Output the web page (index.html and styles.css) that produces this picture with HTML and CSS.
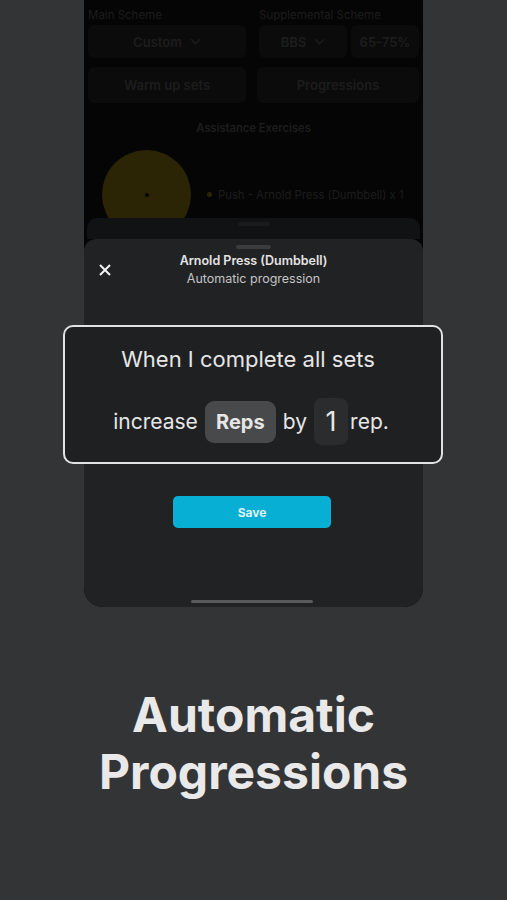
FILE: index.html
```html
<!DOCTYPE html>
<html lang="en">

<head>
    <meta charset="UTF-8">
    <meta name="viewport" content="width=device-width, initial-scale=1.0">
    <title>Automatic Progressions</title>
    <link rel="stylesheet" href="styles.css">
</head>

<body>
    <div class="stage">
        <div class="phone">
            <!-- dimmed program screen behind the sheet -->
            <div class="backdrop">
                <div class="scheme-row">
                    <div class="scheme-col">
                        <span class="label">Main Scheme</span>
                        <div class="chip">Custom
                            <svg class="chevron" viewBox="0 0 12 8"><path d="M1 1.5l5 5 5-5" /></svg>
                        </div>
                    </div>
                    <div class="scheme-col">
                        <span class="label">Supplemental Scheme</span>
                        <div class="chip-pair">
                            <div class="chip">BBS
                                <svg class="chevron" viewBox="0 0 12 8"><path d="M1 1.5l5 5 5-5" /></svg>
                            </div>
                            <div class="chip">65-75%</div>
                        </div>
                    </div>
                </div>
                <div class="action-row">
                    <div class="chip tall">Warm up sets</div>
                    <div class="chip tall">Progressions</div>
                </div>
                <p class="section-title">Assistance Exercises</p>
                <div class="chart-row">
                    <div class="pie"><span class="pie-dot"></span></div>
                    <div class="legend"><span class="legend-dot"></span>Push - Arnold Press (Dumbbell) x 1</div>
                </div>
            </div>

            <div class="sheet-back"><span class="sheet-back-tab"></span></div>

            <div class="sheet">
                <span class="handle"></span>
                <div class="sheet-header">
                    <svg class="close" viewBox="0 0 12 12"><path d="M1 1l10 10M11 1L1 11" /></svg>
                    <div class="sheet-title">
                        <p class="title">Arnold Press (Dumbbell)</p>
                        <p class="subtitle">Automatic progression</p>
                    </div>
                </div>
                <button class="save-btn">Save</button>
                <span class="home-bar"></span>
            </div>
        </div>

        <!-- zoomed rule, drawn over the sheet -->
        <div class="callout">
            <p class="callout-line">When I complete all sets</p>
            <div class="callout-row">
                <span>increase</span>
                <span class="pill reps">Reps</span>
                <span>by</span>
                <span class="pill amount">1</span>
                <span class="unit">rep.</span>
            </div>
        </div>

        <h1 class="headline">Automatic<br>Progressions</h1>
    </div>
</body>

</html>
```

FILE: styles.css
```css
body {
    margin: 0;
    background-color: #333436;
    font-family: Inter, "Noto Sans", sans-serif;
}

.stage {
    position: relative;
    width: 507px;
    height: 900px;
    overflow: hidden;
}

.phone {
    width: 339px;
    height: 607px;
    margin: 0 auto;
    background-color: #050505;
    border-radius: 0 0 19px 19px;
    overflow: hidden;
    display: flex;
    flex-direction: column;
}

/* dimmed screen */
.backdrop {
    height: 218px;
    flex-shrink: 0;
    padding: 7px 4px 0;
    box-sizing: border-box;
    overflow: hidden;
    color: #1d1d1d;
}

.scheme-row {
    display: flex;
    gap: 13px;
}

.scheme-col {
    display: flex;
    flex-direction: column;
    gap: 2px;
}

.scheme-col:first-child {
    width: 158px;
}

.scheme-col:last-child {
    flex: 1;
}

.label {
    font-size: 11.5px;
    line-height: 16px;
}

.chip {
    height: 33px;
    background-color: #0b0b0b;
    border-radius: 6px;
    display: flex;
    align-items: center;
    justify-content: center;
    gap: 8px;
    font-size: 13px;
    font-weight: 600;
}

.chip-pair {
    display: flex;
    gap: 4px;
}

.chip-pair .chip:first-child {
    width: 88px;
}

.chip-pair .chip:last-child {
    flex: 1;
}

.chevron {
    width: 11px;
    height: 7px;
    fill: none;
    stroke: #1d1d1d;
    stroke-width: 1.6;
}

.action-row {
    display: flex;
    gap: 11px;
    margin-top: 9px;
}

.action-row .chip {
    height: 36px;
}

.action-row .chip:first-child {
    width: 158px;
}

.action-row .chip:last-child {
    flex: 1;
}

.section-title {
    margin: 17px 0 0;
    text-align: center;
    font-size: 11.2px;
    font-weight: 600;
    line-height: 16px;
}

.chart-row {
    display: flex;
    align-items: center;
    margin-top: 14px;
}

.pie {
    width: 89px;
    height: 89px;
    margin-left: 14px;
    border-radius: 50%;
    background-color: #2b2405;
    display: flex;
    align-items: center;
    justify-content: center;
}

.pie-dot {
    width: 4px;
    height: 4px;
    border-radius: 50%;
    background-color: #050505;
}

.legend {
    display: flex;
    align-items: center;
    gap: 6px;
    margin-left: 16px;
    font-size: 11.3px;
}

.legend-dot {
    width: 5px;
    height: 5px;
    border-radius: 50%;
    background-color: #2b2405;
}

/* stacked sheets */
.sheet-back {
    height: 21px;
    flex-shrink: 0;
    margin: 0 3px;
    background-color: #111214;
    border-radius: 10px 10px 0 0;
    display: flex;
    justify-content: center;
}

.sheet-back-tab {
    width: 32px;
    height: 4px;
    margin-top: 4px;
    border-radius: 2px;
    background-color: #1a1b1d;
}

.sheet {
    flex: 1;
    background-color: #212224;
    border-radius: 12px 12px 0 0;
    display: flex;
    flex-direction: column;
    align-items: center;
}

.handle {
    width: 35px;
    height: 4px;
    margin-top: 6px;
    border-radius: 2px;
    background-color: #3b3c3e;
}

.sheet-header {
    align-self: stretch;
    display: flex;
    align-items: center;
    margin-top: 3px;
    padding: 0 15px;
}

.close {
    width: 12px;
    height: 12px;
    fill: none;
    stroke: #f2f2f2;
    stroke-width: 2;
}

.sheet-title {
    flex: 1;
    margin-right: 12px;
    text-align: center;
}

.sheet-title p {
    margin: 0;
    font-size: 12.5px;
    line-height: 18px;
}

.title {
    font-weight: 600;
    color: #e4e4e4;
}

.subtitle {
    color: #c4c4c4;
}

.save-btn {
    width: 158px;
    height: 32px;
    margin: 208px 3px 0 0;
    border: none;
    border-radius: 5px;
    background-color: #07afd5;
    color: #dff3f8;
    font-family: inherit;
    font-size: 12px;
    font-weight: 700;
}

.home-bar {
    width: 122px;
    height: 3px;
    margin: auto 3px 4px 0;
    border-radius: 2px;
    background-color: #5a5b5d;
}

/* callout */
.callout {
    position: absolute;
    left: 63px;
    top: 325px;
    width: 380px;
    height: 139px;
    box-sizing: border-box;
    border: 2px solid #e2e2e2;
    border-radius: 10px;
    background-color: #1f2022;
    color: #e6e6e6;
    padding-top: 19px;
    font-size: 21px;
}

.callout-line {
    margin: 0;
    font-size: 22px;
    line-height: 26px;
    text-align: center;
    padding-right: 10px;
}

.callout-row {
    display: flex;
    align-items: center;
    justify-content: center;
    gap: 7px;
    margin-top: 26px;
    padding-right: 4px;
}

.pill {
    display: flex;
    align-items: center;
    justify-content: center;
}

.reps {
    width: 71px;
    height: 42px;
    border-radius: 9px;
    background-color: #48494b;
    font-weight: 700;
    font-size: 20px;
}

.amount {
    width: 34px;
    height: 47px;
    border-radius: 8px;
    background-color: #2b2c2e;
    font-size: 27px;
}

.unit {
    margin-left: -5px;
}

.headline {
    margin: 79px 0 0;
    text-align: center;
    font-size: 48px;
    line-height: 57px;
    font-weight: 700;
    color: #e9e9e9;
}
```
